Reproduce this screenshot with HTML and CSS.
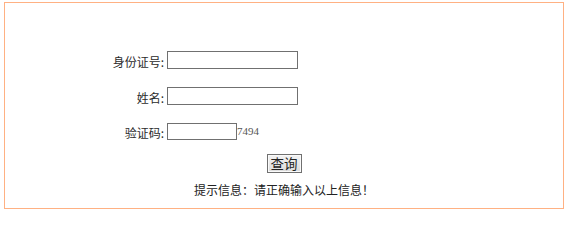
FILE: index.html
```html
<!DOCTYPE html>
<html>
<head>
<meta charset="utf-8">
<link rel="stylesheet" href="styles.css">
</head>
<body>
<div class="box">
  <div class="form">
    <label class="lbl">身份证号:</label>
    <div class="field"><input class="inp" type="text"></div>
    <label class="lbl">姓名:</label>
    <div class="field"><input class="inp" type="text"></div>
    <label class="lbl">验证码:</label>
    <div class="field"><input class="inp code" type="text"><span class="captcha">7494</span></div>
  </div>
  <div class="actions"><button class="btn" type="button">查询</button></div>
  <div class="hint">提示信息：请正确输入以上信息！</div>
</div>
</body>
</html>
```

FILE: styles.css
```css
html, body {
  margin: 0;
  padding: 0;
  background: #fff;
}
body {
  font-family: "Noto Sans CJK SC", "Liberation Sans", sans-serif;
  font-size: 12px;
  color: #2b2b2b;
}
.box {
  margin: 2px 0 0 4px;
  width: 558px;
  height: 205px;
  border: 1px solid #ffb183;
  box-sizing: content-box;
}
.form {
  display: grid;
  grid-template-columns: 162px auto;
  grid-auto-rows: 18px;
  row-gap: 17.5px;
  padding-top: 48px;
}
.lbl {
  justify-self: end;
  align-self: center;
  line-height: 18px;
  padding-top: 4px;
  padding-right: 3px;
}
.field {
  display: flex;
  align-items: flex-end;
}
.inp {
  margin: 0;
  padding: 0;
  width: 131px;
  height: 18px;
  box-sizing: border-box;
  border: 1px solid #707070;
  background: #fff;
}
.inp.code {
  width: 70px;
  height: 17px;
}
.captcha {
  font-family: "Liberation Serif", serif;
  font-size: 11px;
  color: #555;
  line-height: 13px;
  margin-bottom: 2px;
}
.actions {
  display: flex;
  justify-content: center;
  padding-top: 14px;
}
.btn {
  margin: 0;
  height: 19px;
  padding: 0 3px;
  font-family: "Noto Sans CJK SC", sans-serif;
  font-size: 13.5px;
  line-height: 15px;
  color: #222;
  border: 1px solid #707070;
  border-radius: 0;
  background: linear-gradient(#f3f3f3, #dcdcdc);
  box-shadow: inset 0 0 0 1px #fafafa;
}
.hint {
  text-align: center;
  padding-top: 10px;
  line-height: 14px;
  color: #222;
}
```
